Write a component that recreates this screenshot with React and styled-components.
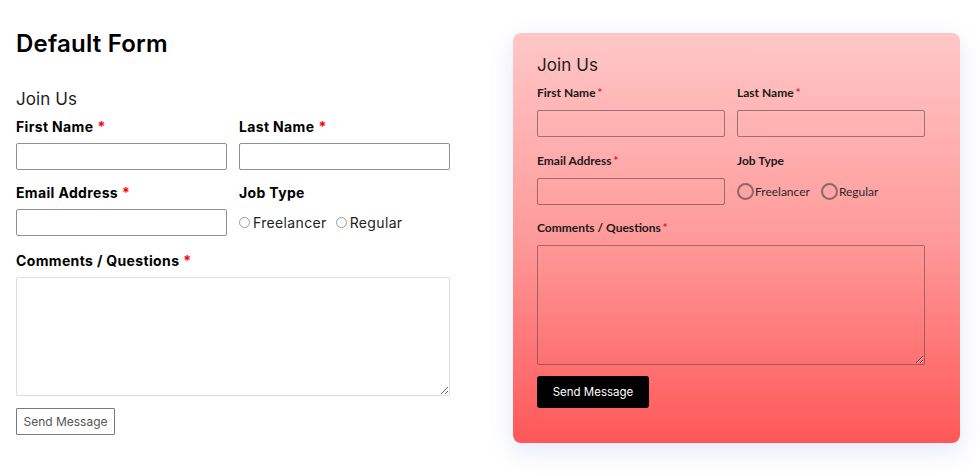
import React from "react";
import styled, { createGlobalStyle } from "styled-components";

const Global = createGlobalStyle`
  html, body { margin: 0; padding: 0; background: #fff; }
  body { font-family: Inter, "Noto Sans", sans-serif; }
  * { box-sizing: border-box; }
`;

const Page = styled.div`
  display: flex;
  align-items: flex-start;
  gap: 63px;
  padding: 29px 0 0 16px;
  width: 980px;
  height: 474px;
  overflow: hidden;
`;

const LeftCol = styled.div`
  width: 434px;
  display: flex;
  flex-direction: column;
`;

const Title = styled.h1`
  margin: 0;
  font-family: Inter, sans-serif;
  font-size: 24px;
  line-height: 30px;
  font-weight: 600;
  color: #000;
  letter-spacing: 0.2px;
`;

const FormTitle = styled.h2`
  margin: ${(p) => p.$mt}px 0 0;
  font-family: Inter, sans-serif;
  font-size: 17px;
  line-height: 24px;
  font-weight: 400;
  color: #1d1d1d;
  letter-spacing: 0.1px;
`;

const Grid = styled.div`
  display: grid;
  grid-template-columns: 1fr 1fr;
  column-gap: 12px;
  margin-top: ${(p) => p.$mt}px;
`;

const Field = styled.div`
  display: flex;
  flex-direction: column;
  margin-top: ${(p) => p.$mt || 0}px;
`;

const LeftLabel = styled.label`
  font-family: Inter, sans-serif;
  font-size: 14px;
  line-height: 20px;
  font-weight: 700;
  color: #000;
  letter-spacing: 0.35px;
  margin-bottom: 6px;
`;

const RightLabel = styled.label`
  font-family: Lato, sans-serif;
  font-size: 12px;
  line-height: 16px;
  font-weight: 700;
  color: #1a1a1a;
  margin-bottom: 9px;
`;

const Req = styled.span`
  color: ${(p) => (p.$light ? "#e0191f" : "#ff0000")};
  font-size: ${(p) => (p.$light ? "11px" : "14px")};
  margin-left: ${(p) => (p.$light ? 2 : 4)}px;
`;

const LeftInput = styled.input`
  height: 27px;
  width: 100%;
  border: 1px solid #8f8f8f;
  border-radius: 2px;
  background: #fff;
  outline: none;
`;

const RightInput = styled.input`
  height: 27px;
  width: 100%;
  border: 1px solid rgba(70, 60, 60, 0.55);
  border-radius: 2px;
  background: transparent;
  outline: none;
`;

const LeftTextArea = styled.textarea`
  display: block;
  width: 100%;
  height: 119px;
  border: 1px solid #dcdcdc;
  border-radius: 2px;
  background: #fff;
  resize: vertical;
  outline: none;
`;

const RightTextArea = styled.textarea`
  display: block;
  width: 100%;
  height: 120px;
  border: 1px solid rgba(70, 60, 60, 0.5);
  border-radius: 2px;
  background: transparent;
  resize: vertical;
  outline: none;
`;

const RadioRow = styled.div`
  display: flex;
  align-items: center;
  height: 27px;
  gap: ${(p) => p.$gap}px;
`;

const RadioOption = styled.label`
  display: flex;
  align-items: center;
  gap: ${(p) => p.$gap}px;
  font-family: ${(p) => (p.$lato ? "Lato, sans-serif" : "Inter, sans-serif")};
  font-size: ${(p) => p.$size}px;
  letter-spacing: ${(p) => (p.$lato ? 0 : 0.35)}px;
  color: ${(p) => (p.$lato ? "#2a2a2a" : "#222")};
`;

const SmallRadio = styled.input.attrs({ type: "radio" })`
  appearance: none;
  margin: 0;
  width: 11px;
  height: 11px;
  border: 1px solid #9a9a9a;
  border-radius: 50%;
  background: #fff;
`;

const BigRadio = styled.input.attrs({ type: "radio" })`
  appearance: none;
  margin: 0;
  width: 17px;
  height: 17px;
  border: 2px solid rgba(90, 80, 80, 0.7);
  border-radius: 50%;
  background: transparent;
`;

const OutlineButton = styled.button`
  align-self: flex-start;
  margin-top: 12px;
  width: 99px;
  height: 27px;
  border: 1px solid #7a7a7a;
  border-radius: 1px;
  background: #fff;
  font-family: Inter, sans-serif;
  font-size: 12px;
  color: #555;
  padding: 0;
`;

const DarkButton = styled.button`
  align-self: flex-start;
  margin-top: 11px;
  width: 112px;
  height: 32px;
  border: none;
  border-radius: 3px;
  background: #000;
  font-family: Inter, sans-serif;
  font-size: 11.5px;
  color: #fff;
  padding: 0;
`;

const Panel = styled.div`
  margin-top: 4px;
  width: 447px;
  height: 410px;
  padding: 20px 35px 0 24px;
  border-radius: 8px;
  background: linear-gradient(180deg, #ffc7c7 0%, #ff9a9a 50%, #ff5757 100%);
  box-shadow: 0 8px 24px rgba(90, 110, 230, 0.16);
  display: flex;
  flex-direction: column;
`;

export default function App() {
  return (
    <>
      <Global />
      <Page>
        <LeftCol>
          <Title>Default Form</Title>
          <FormTitle $mt={28}>Join Us</FormTitle>
          <Grid $mt={6}>
            <Field>
              <LeftLabel>First Name<Req>*</Req></LeftLabel>
              <LeftInput type="text" />
            </Field>
            <Field>
              <LeftLabel>Last Name<Req>*</Req></LeftLabel>
              <LeftInput type="text" />
            </Field>
            <Field $mt={13}>
              <LeftLabel>Email Address<Req>*</Req></LeftLabel>
              <LeftInput type="email" />
            </Field>
            <Field $mt={13}>
              <LeftLabel>Job Type</LeftLabel>
              <RadioRow $gap={9}>
                <RadioOption $gap={3} $size={14}><SmallRadio name="l-job" />Freelancer</RadioOption>
                <RadioOption $gap={3} $size={14}><SmallRadio name="l-job" />Regular</RadioOption>
              </RadioRow>
            </Field>
          </Grid>
          <Field $mt={15}>
            <LeftLabel>Comments / Questions<Req>*</Req></LeftLabel>
            <LeftTextArea />
          </Field>
          <OutlineButton>Send Message</OutlineButton>
        </LeftCol>
        <Panel>
          <FormTitle $mt={0}>Join Us</FormTitle>
          <Grid $mt={8}>
            <Field>
              <RightLabel>First Name<Req $light>*</Req></RightLabel>
              <RightInput type="text" />
            </Field>
            <Field>
              <RightLabel>Last Name<Req $light>*</Req></RightLabel>
              <RightInput type="text" />
            </Field>
            <Field $mt={16}>
              <RightLabel>Email Address<Req $light>*</Req></RightLabel>
              <RightInput type="email" />
            </Field>
            <Field $mt={16}>
              <RightLabel>Job Type</RightLabel>
              <RadioRow $gap={11}>
                <RadioOption $lato $gap={1} $size={12}><BigRadio name="r-job" />Freelancer</RadioOption>
                <RadioOption $lato $gap={1} $size={12}><BigRadio name="r-job" />Regular</RadioOption>
              </RadioRow>
            </Field>
          </Grid>
          <Field $mt={15}>
            <RightLabel>Comments / Questions<Req $light>*</Req></RightLabel>
            <RightTextArea />
          </Field>
          <DarkButton>Send Message</DarkButton>
        </Panel>
      </Page>
    </>
  );
}
